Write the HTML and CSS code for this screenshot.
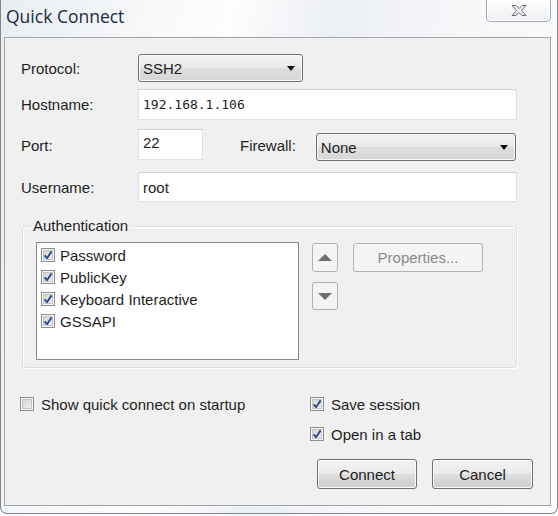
FILE: index.html
```html
<!DOCTYPE html>
<html lang="en">
<head>
  <meta charset="UTF-8" />
  <title>Quick Connect</title>
  <link rel="stylesheet" href="styles.css">
</head>
<body>
  <div class="window">
    <div class="titlebar">
      <span class="title">Quick Connect</span>
      <span class="close-btn">
        <svg width="16" height="11" viewBox="0 0 16 11"><polygon points="1,0.5 5,0.5 8,3.5 11,0.5 15,0.5 10.5,5.5 15,10.5 11,10.5 8,7.5 5,10.5 1,10.5 5.5,5.5" fill="#ececee" stroke="#6b6f76" stroke-width="1"/></svg>
      </span>
    </div>

    <div class="client">
      <div class="row row-protocol">
        <label>Protocol:</label>
        <div class="combo combo-protocol"><span>SSH2</span><i class="arrow"></i></div>
      </div>
      <div class="row row-host">
        <label>Hostname:</label>
        <div class="edit edit-wide edit-host">192.168.1.106</div>
      </div>
      <div class="row row-port">
        <label>Port:</label>
        <div class="edit edit-port">22</div>
        <label class="fw-label">Firewall:</label>
        <div class="combo combo-fw"><span>None</span><i class="arrow"></i></div>
      </div>
      <div class="row row-user">
        <label>Username:</label>
        <div class="edit edit-wide">root</div>
      </div>

      <fieldset class="group">
        <legend>Authentication</legend>
        <div class="auth">
          <ul class="listbox">
            <li class="item"><span class="check on"></span>Password</li>
            <li class="item"><span class="check on"></span>PublicKey</li>
            <li class="item"><span class="check on"></span>Keyboard Interactive</li>
            <li class="item"><span class="check on"></span>GSSAPI</li>
          </ul>
          <div class="order-btns">
            <button class="small-btn up"><i class="tri tri-up"></i></button>
            <button class="small-btn down"><i class="tri tri-down"></i></button>
          </div>
          <button class="btn props" disabled>Properties...</button>
        </div>
      </fieldset>

      <div class="options">
        <div class="opt-left">
          <div class="opt"><span class="check"></span>Show quick connect on startup</div>
        </div>
        <div class="opt-right">
          <div class="opt"><span class="check on"></span>Save session</div>
          <div class="opt"><span class="check on"></span>Open in a tab</div>
        </div>
      </div>

      <div class="actions">
        <button class="btn btn-connect">Connect</button>
        <button class="btn btn-cancel">Cancel</button>
      </div>
    </div>
  </div>
</body>
</html>
```

FILE: styles.css
```css
* { box-sizing: border-box; margin: 0; padding: 0; }
body {
  width: 558px;
  height: 516px;
  overflow: hidden;
  background: #f8f9fa;
  font-family: "Liberation Sans", Arial, sans-serif;
  font-size: 15px;
  color: #1e1e1e;
}
.window {
  width: 558px;
  height: 514px;
  border: 1px solid #80858c;
  border-top: none;
  border-radius: 0 0 7px 7px;
  background: linear-gradient(100deg, #e9edf1 0%, #f5f7f9 20%, #fdfdfe 36%, #eceff3 52%, #f6f7f9 72%, #fbfcfd 100%);
}
.titlebar {
  height: 37px;
  display: flex;
  justify-content: space-between;
  align-items: flex-start;
}
.title {
  margin: 6px 0 0 5px;
  font-family: "Open Sans", sans-serif;
  font-size: 17.5px;
  line-height: 20px;
  color: #1b2b45;
}
.close-btn {
  width: 65px;
  height: 22px;
  margin-right: 6px;
  display: flex;
  align-items: center;
  justify-content: center;
  border: 1px solid #a2a7ae;
  border-top: none;
  border-radius: 0 0 5px 5px;
  background: linear-gradient(#fdfdfe, #eef0f3);
  box-shadow: inset 0 0 0 1px #fff;
}

.client {
  margin-left: 3px;
  width: 547px;
  height: 469px;
  border: 1px solid #a0a3a8;
  background: #f0f0f0;
}

/* form rows */
.row {
  display: flex;
  align-items: center;
  margin-left: 16px;
}
.row label { width: 117px; flex: none; }
.row-protocol { margin-top: 16px; height: 28px; }
.row-host { margin-top: 7px; height: 31px; }
.row-port { margin-top: 9px; height: 32px; align-items: flex-start; }
.row-port label { align-self: center; }
.row-user { margin-top: 11px; height: 30px; }

.combo {
  display: flex;
  align-items: center;
  justify-content: space-between;
  height: 28px;
  padding: 0 7px 0 4px;
  border: 1px solid #707070;
  border-radius: 3px;
  background: linear-gradient(#f3f3f3, #e9e9e9 50%, #dedede 51%, #d6d6d6);
  box-shadow: inset 0 0 0 1px #f8f8f8;
}
.combo-protocol { width: 165px; }
.combo-fw { width: 200px; margin-top: 4px; }
.arrow {
  width: 0;
  height: 0;
  border-left: 4px solid transparent;
  border-right: 4px solid transparent;
  border-top: 5px solid #111;
}

.edit {
  height: 31px;
  padding: 0 4px;
  display: flex;
  align-items: center;
  background: #fff;
  border: 1px solid #dde1e6;
  border-top-color: #cdd1d7;
}
.edit-wide { width: 379px; }
.row-user .edit { height: 30px; }
.edit-host {
  font-family: "DejaVu Sans Mono", monospace;
  font-size: 13px;
}
.edit-port {
  width: 65px;
  align-items: flex-start;
  padding-top: 4px;
}
.fw-label {
  width: auto !important;
  margin: 0 20px 0 37px;
}

/* authentication group */
.group {
  margin: 15px 0 0 17px;
  width: 495px;
  border: 1px solid #d5dfe5;
  border-radius: 3px;
  box-shadow: inset 1px 1px 0 #fff, 1px 1px 0 #fff;
}
.group legend {
  margin-left: 8px;
  padding: 0 2px;
  line-height: 18px;
}
.auth {
  display: flex;
  align-items: flex-start;
  padding: 7px 0 7px 13px;
}
.listbox {
  list-style: none;
  width: 263px;
  height: 118px;
  padding: 1px 0 0 4px;
  background: #fff;
  border: 1px solid #828790;
}
.item {
  display: flex;
  align-items: center;
  gap: 5px;
  height: 22px;
}

.check {
  width: 14px;
  height: 14px;
  flex: none;
  border: 1px solid #8e8f8f;
  background: linear-gradient(135deg, #cfd0d2, #f3f3f3);
  box-shadow: inset 0 0 0 1px #f6f6f6, inset 0 0 0 2px #c3c5c8;
}
.check.on {
  background-image: url("data:image/svg+xml,%3Csvg xmlns='http://www.w3.org/2000/svg' viewBox='0 0 12 12'%3E%3Cpath d='M2.6 6.4 L5 9.2 L9.6 2.4' fill='none' stroke='%232b4a8c' stroke-width='1.9'/%3E%3C/svg%3E"), linear-gradient(135deg, #cfd0d2, #f3f3f3);
  background-size: 12px 12px, auto;
  background-position: center, center;
  background-repeat: no-repeat;
}

.order-btns {
  display: flex;
  flex-direction: column;
  margin-left: 13px;
  margin-top: 1px;
}
.small-btn {
  width: 26px;
  height: 29px;
  display: flex;
  align-items: center;
  justify-content: center;
  border: 1px solid #adb2b5;
  border-radius: 3px;
  background: #f4f4f4;
}
.small-btn.down { margin-top: 10px; height: 28px; }
.tri {
  width: 0;
  height: 0;
  border-left: 7px solid transparent;
  border-right: 7px solid transparent;
}
.tri-up { border-bottom: 7px solid #6e6e6e; }
.tri-down { border-top: 7px solid #6e6e6e; }

.btn {
  height: 30px;
  font-family: "Liberation Sans", Arial, sans-serif;
  font-size: 15px;
  color: #1e1e1e;
  border: 1px solid #707070;
  border-radius: 3px;
  background: linear-gradient(#f2f2f2, #ebebeb 48%, #dddddd 52%, #cfcfcf);
  box-shadow: inset 0 0 0 1px #fbfbfb;
}
.props {
  width: 130px;
  height: 29px;
  margin: 1px 0 0 15px;
  color: #8a8a8a;
  border-color: #adb2b5;
  background: #f4f4f4;
  box-shadow: none;
}

/* bottom options */
.options {
  display: flex;
  margin-top: 25px;
}
.opt-left { margin-left: 15px; width: 290px; }
.opt-right { display: flex; flex-direction: column; gap: 8px; }
.opt {
  display: flex;
  align-items: center;
  gap: 7px;
  height: 22px;
}

.actions {
  display: flex;
  justify-content: flex-end;
  gap: 15px;
  margin-top: 14px;
  padding-right: 17px;
}
.btn-connect { width: 100px; }
.btn-cancel { width: 101px; }
```
